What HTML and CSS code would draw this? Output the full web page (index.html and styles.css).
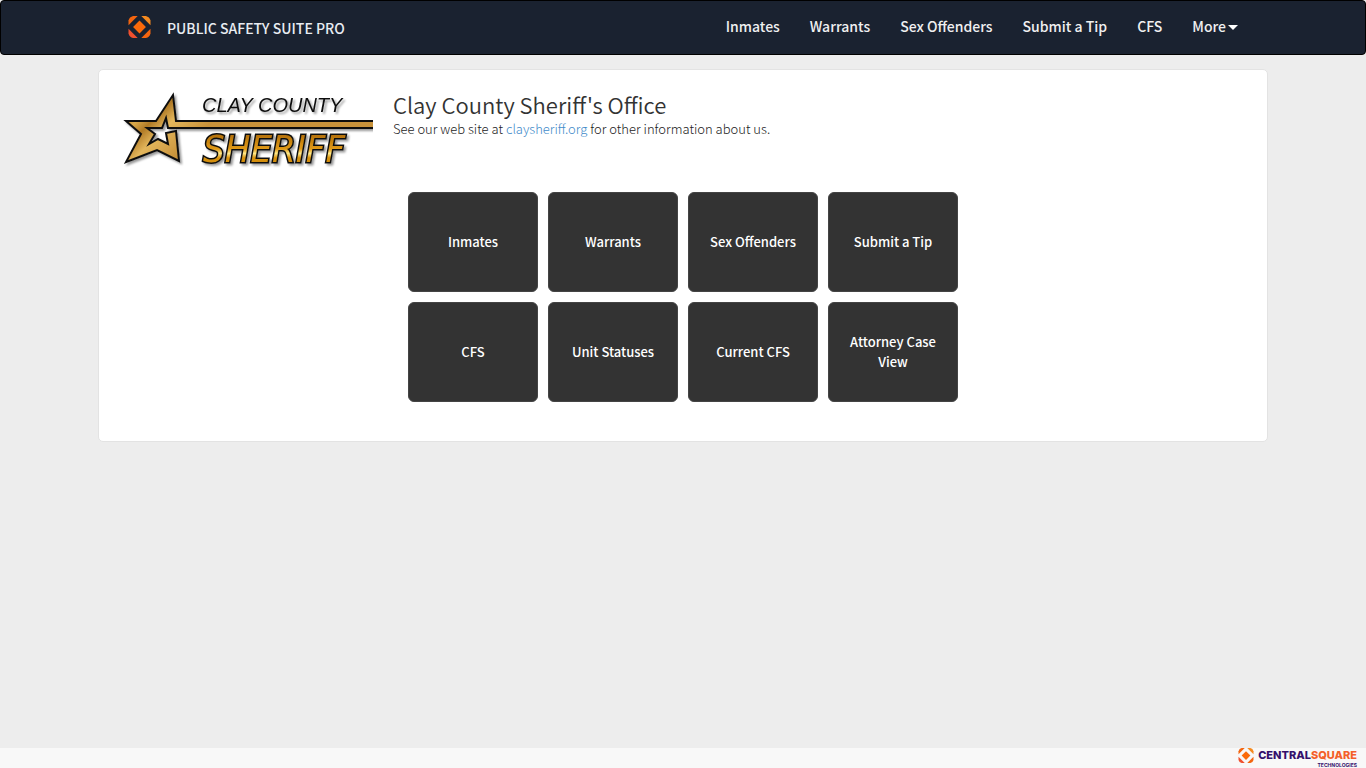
FILE: index.html
```html
<!DOCTYPE html>
<html lang="en">
<head>
    <meta charset="UTF-8">
    <meta name="viewport" content="width=device-width, initial-scale=1.0">
    <title>Clay County Sheriff's Office</title>
    <link rel="stylesheet" href="styles.css">
</head>
<body>

    <header class="navbar">
        <div class="navbar-inner">
            <a class="brand" href="#">
                <svg class="brand-icon" viewBox="0 0 24 24" aria-hidden="true">
                    <g id="square-mark">
                        <path fill="#fb6a0a" d="M12 5L19 12L12 19L5 12Z"/>
                        <path fill="#f4650f" d="M5 0H10L0 10V5Q1 1 5 0Z"/>
                        <path fill="#f58a1f" d="M14 0H19Q23 1 24 5V10Z"/>
                        <path fill="#f4650f" d="M24 14V19Q23 23 19 24H14Z"/>
                        <path fill="#f0502e" d="M10 24H5Q1 23 0 19V14Z"/>
                    </g>
                </svg>
                <span>PUBLIC SAFETY SUITE PRO</span>
            </a>
            <nav class="nav-links">
                <a href="#">Inmates</a>
                <a href="#">Warrants</a>
                <a href="#">Sex Offenders</a>
                <a href="#">Submit a Tip</a>
                <a href="#">CFS</a>
                <a href="#">More<span class="caret"></span></a>
            </nav>
        </div>
    </header>

    <main class="container">
        <div class="agency">
            <!-- Agency logo -->
            <svg class="agency-logo" viewBox="0 0 250 80" role="img" aria-label="Clay County Sheriff">
                <defs>
                    <linearGradient id="starGold" x1="0" y1="20" x2="50" y2="70" gradientUnits="userSpaceOnUse">
                        <stop offset="0" stop-color="#b57f28"/>
                        <stop offset="0.25" stop-color="#d9a84a"/>
                        <stop offset="0.4" stop-color="#b07a26"/>
                        <stop offset="0.6" stop-color="#e3b65c"/>
                        <stop offset="1" stop-color="#c8923a"/>
                    </linearGradient>
                    <linearGradient id="textGold" x1="0" y1="0" x2="0" y2="1">
                        <stop offset="0.2" stop-color="#b87408"/>
                        <stop offset="0.5" stop-color="#e09a18"/>
                        <stop offset="0.6" stop-color="#ffe98a"/>
                        <stop offset="0.7" stop-color="#d8920f"/>
                        <stop offset="0.9" stop-color="#d08a10"/>
                    </linearGradient>
                    <filter id="logoShadow" x="-5%" y="-10%" width="110%" height="130%">
                        <feDropShadow dx="2" dy="2" stdDeviation="1" flood-color="#000" flood-opacity="0.4"/>
                    </filter>
                </defs>
                <g filter="url(#logoShadow)">
                    <path class="star" d="M50 5L53 31H254V38H45L43 28L39 38H24L32 44L26 54L35 49L45 54L43 43L53 41L56 71L34 60L3 72L18 44L3 31H33Z"/>
                    <text class="logo-county" x="79" y="22">CLAY COUNTY</text>
                    <text class="logo-sheriff" x="80" y="72">SHERIFF</text>
                </g>
            </svg>
            <div class="agency-info">
                <h1>Clay County Sheriff's Office</h1>
                <p>See our web site at <a href="#">claysheriff.org</a> for other information about us.</p>
            </div>
        </div>

        <!-- Module links -->
        <div class="tiles">
            <a class="tile" href="#">Inmates</a>
            <a class="tile" href="#">Warrants</a>
            <a class="tile" href="#">Sex Offenders</a>
            <a class="tile" href="#">Submit a Tip</a>
            <a class="tile" href="#">CFS</a>
            <a class="tile" href="#">Unit Statuses</a>
            <a class="tile" href="#">Current CFS</a>
            <a class="tile" href="#">Attorney Case View</a>
        </div>
    </main>

    <footer class="footer">
        <a class="vendor" href="#">
            <svg class="vendor-icon" viewBox="0 0 24 24" aria-hidden="true"><use href="#square-mark"/></svg>
            <span class="vendor-name">
                <span class="vendor-title">CENTRAL<b>SQUARE</b></span>
                <span class="vendor-sub">TECHNOLOGIES</span>
            </span>
        </a>
    </footer>

</body>
</html>
```

FILE: styles.css
```css
* {
    box-sizing: border-box;
}

body {
    margin: 0;
    min-height: 100vh;
    display: flex;
    flex-direction: column;
    background-color: #ededed;
    color: #333;
    font-family: "Noto Sans CJK SC", "Noto Sans", sans-serif;
    font-size: 13px;
    line-height: 20px;
}

a {
    color: #428bca;
    text-decoration: none;
}

.navbar {
    background-color: #1a2230;
    border: 1px solid #000;
    border-radius: 4px;
    margin-bottom: 14px;
}

.navbar-inner {
    max-width: 1170px;
    min-height: 53px;
    margin: 0 auto;
    padding: 0 30px;
    display: flex;
    justify-content: space-between;
    align-items: center;
}

.brand {
    display: flex;
    align-items: center;
    gap: 16px;
    color: #e8ecf2;
    font-size: 14px;
    font-weight: 500;
}

.brand-icon {
    width: 23px;
    height: 24px;
    padding-bottom: 2px;
}

.nav-links {
    display: flex;
    gap: 30px;
    padding-bottom: 4px;
}

.nav-links a {
    color: #f0f0f0;
    font-size: 14px;
    font-weight: 500;
}

.caret {
    display: inline-block;
    margin-left: 2px;
    vertical-align: middle;
    border-top: 5px solid #fff;
    border-left: 5px solid transparent;
    border-right: 5px solid transparent;
}

.container {
    width: 100%;
    max-width: 1170px;
    margin: 0 auto;
    padding: 20px 24px 39px;
    background-color: #fff;
    border: 1px solid #e3e3e3;
    border-radius: 5px;
}

.agency {
    display: flex;
    gap: 20px;
    margin-bottom: 22px;
}

.agency-logo {
    width: 250px;
    height: 80px;
}

.star {
    fill: url(#starGold);
    stroke: #111;
    stroke-width: 2px;
}

.logo-county {
    font-family: "Liberation Sans", Arial, sans-serif;
    font-size: 20px;
    font-style: italic;
    fill: #111;
}

.logo-sheriff {
    font-family: "DejaVu Sans Condensed", "Liberation Sans", sans-serif;
    font-size: 38px;
    font-style: italic;
    fill: url(#textGold);
    stroke: #111;
    stroke-width: 3px;
    paint-order: stroke;
}

.agency-info h1 {
    margin: 0 0 1px;
    font-size: 22px;
    font-weight: 350;
    line-height: 28px;
}

.agency-info p {
    margin: 0;
    color: #222;
    font-weight: 300;
}

.tiles {
    width: 100%;
    max-width: 550px;
    margin: 0 auto;
    display: grid;
    grid-template-columns: repeat(4, 1fr);
    gap: 10px;
}

.tile {
    min-height: 100px;
    padding: 10px 20px;
    display: flex;
    justify-content: center;
    align-items: center;
    text-align: center;
    background-color: #333;
    border: 1px solid #444;
    border-radius: 6px;
    color: #fff;
    font-size: 13px;
    font-weight: 500;
}

.footer {
    margin-top: auto;
    height: 20px;
    padding: 0 9px;
    display: flex;
    justify-content: flex-end;
    background-color: #f8f8f8;
}

.vendor {
    display: flex;
    gap: 4px;
    color: #34106b;
}

.vendor-icon {
    width: 16px;
    height: 15px;
}

.vendor-name {
    display: flex;
    flex-direction: column;
    align-items: flex-end;
    font-family: Inter, Roboto, sans-serif;
}

.vendor-title {
    font-size: 11px;
    font-weight: 800;
    line-height: 15px;
}

.vendor-title b {
    color: #f4602a;
    font-weight: 800;
}

.vendor-sub {
    font-size: 5px;
    font-weight: 700;
    line-height: 5px;
}
```
